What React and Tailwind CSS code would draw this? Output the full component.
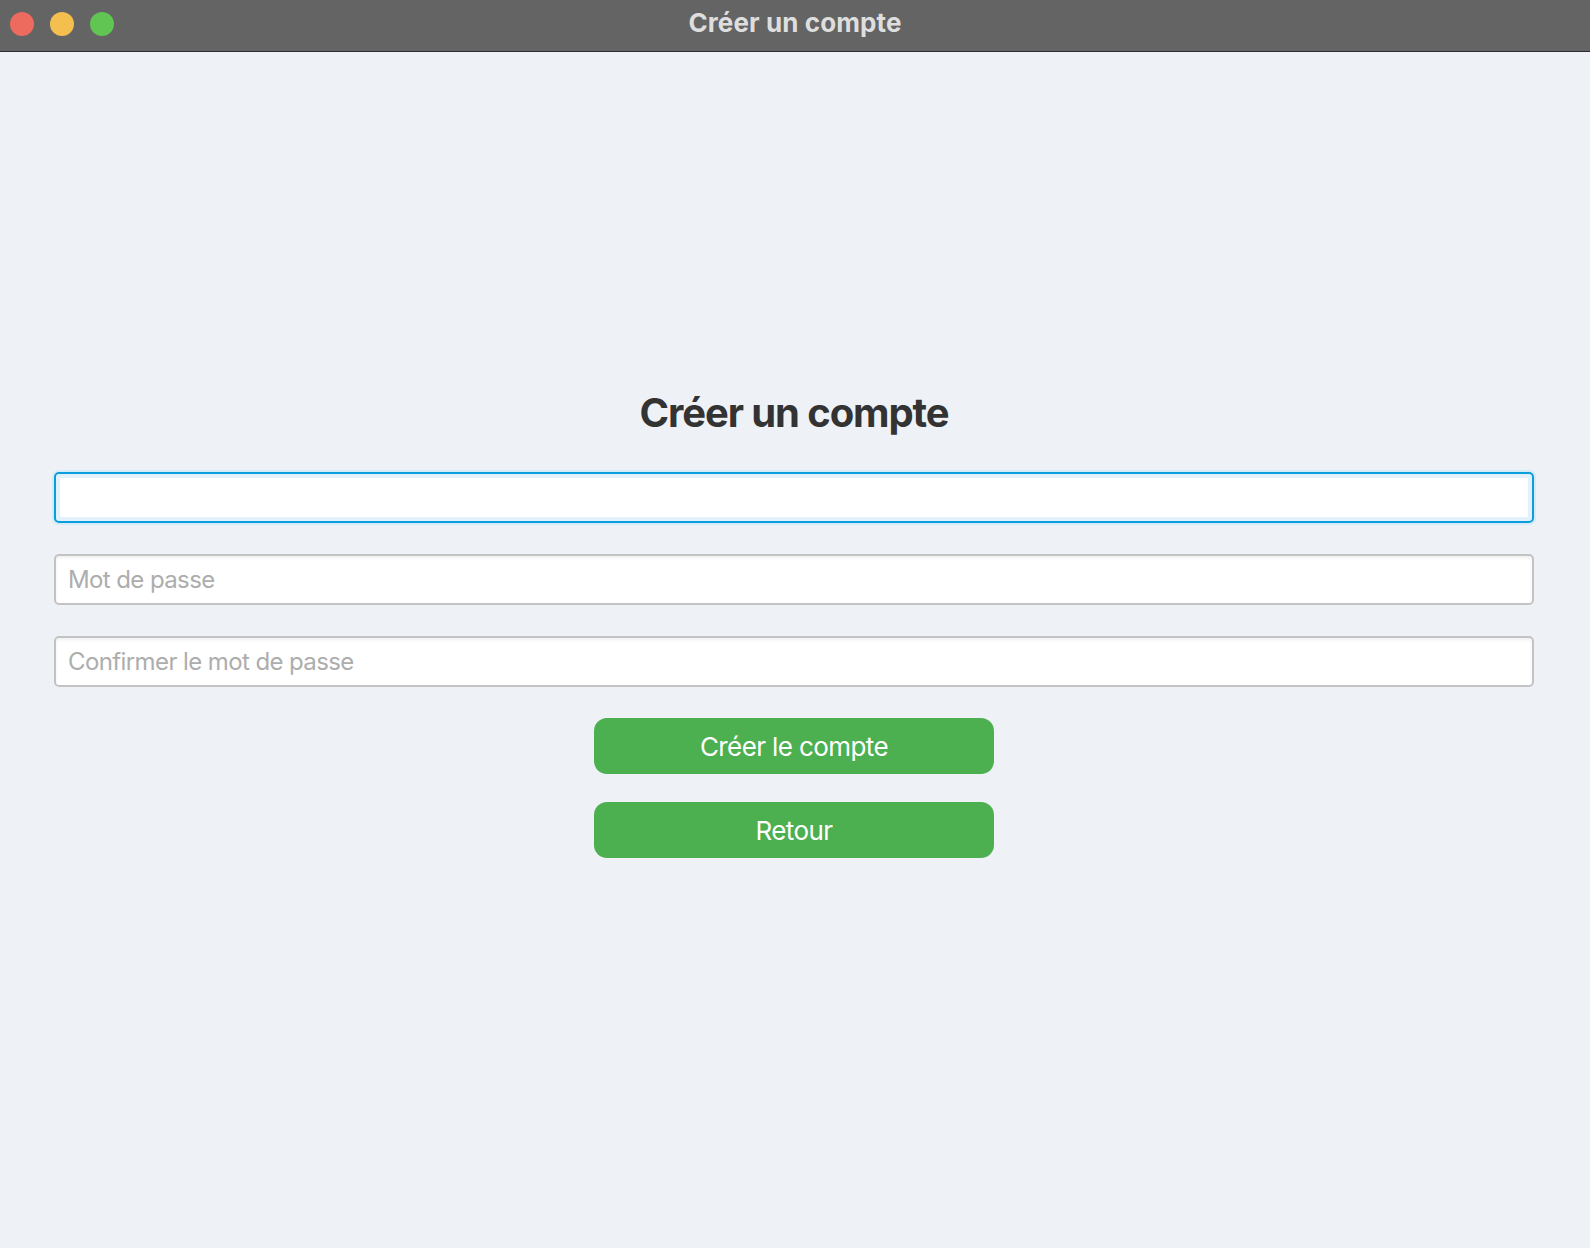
const TrafficLights = () => (
  <div className="absolute left-[10px] top-[12px] flex gap-4">
    <span className="w-6 h-6 rounded-full bg-[#ed6a5e]" />
    <span className="w-6 h-6 rounded-full bg-[#f5bf4f]" />
    <span className="w-6 h-6 rounded-full bg-[#61c554]" />
  </div>
);

const fieldBase =
  "w-full h-[51px] rounded-[5px] bg-white px-[12px] text-[24px] tracking-[-0.6px] text-[#333] placeholder:text-[#adadad] outline-none";

export default function App() {
  return (
    <div className="w-[1590px] h-[1248px] flex flex-col bg-[#eef2f7] font-['Inter','Liberation_Sans',sans-serif]">
      <div className="relative h-[52px] shrink-0 bg-[#646464] border-b border-[#2c2c2c] flex items-center justify-center pb-[5px]">
        <TrafficLights />
        <span className="text-[26px] leading-none font-bold text-[#dedede] tracking-[0.1px]">Créer un compte</span>
      </div>

      <div className="flex-1 flex flex-col items-center pl-[54px] pr-[56px] pt-[337px]">
        <h1 className="text-[40px] leading-[48px] font-bold text-[#333] tracking-[-1.1px] mb-[35px]">
          Créer un compte
        </h1>

        <div className="w-full flex flex-col gap-[31px]">
          <input
            type="text"
            className={`${fieldBase} border-2 border-[#0a9fdc] shadow-[0_0_0_2px_#d5ebf8,inset_0_0_0_4px_#e2f1fb]`}
          />
          <input
            type="password"
            placeholder="Mot de passe"
            className={`${fieldBase} border-2 border-[#c3c3c3] shadow-[inset_0_2px_3px_rgba(0,0,0,0.06)]`}
          />
          <input
            type="password"
            placeholder="Confirmer le mot de passe"
            className={`${fieldBase} border-2 border-[#c3c3c3] shadow-[inset_0_2px_3px_rgba(0,0,0,0.06)]`}
          />
        </div>

        <div className="mt-[31px] flex flex-col gap-[28px]">
          <button className="w-[400px] h-[56px] rounded-[13px] bg-[#4caf50] text-white text-[26px] tracking-[-0.6px]">
            Créer le compte
          </button>
          <button className="w-[400px] h-[56px] rounded-[13px] bg-[#4caf50] text-white text-[26px] tracking-[-0.6px]">
            Retour
          </button>
        </div>
      </div>
    </div>
  );
}
